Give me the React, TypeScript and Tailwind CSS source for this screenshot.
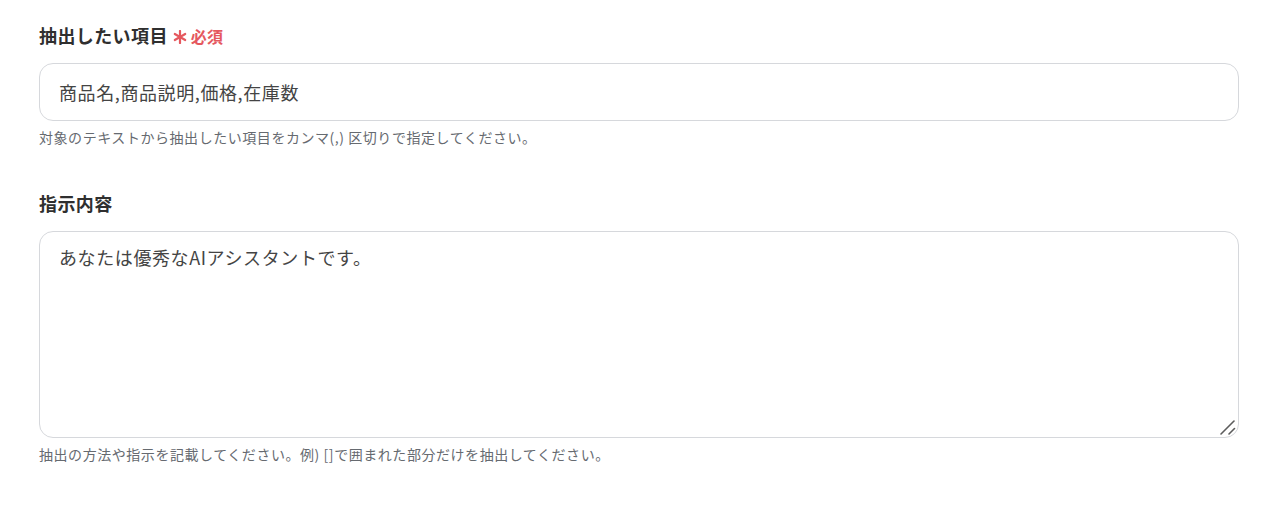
import React from "react";

const font = { fontFamily: '"Noto Sans CJK JP", "Noto Sans", sans-serif' };

const FieldLabel: React.FC<{ text: string; required?: boolean }> = ({ text, required }) => (
  <div className="flex items-center h-[27px]">
    <span className="text-[18px] font-bold text-[#2f2f2f] leading-[27px] tracking-[0.4px]">{text}</span>
    {required && (
      <span className="ml-[5px] flex items-center text-[#e5585e] text-[16px] font-semibold tracking-[0.3px]">
        <svg width="14" height="14" viewBox="0 0 14 14" className="mr-[4px] mt-[3px]">
          <g stroke="#e5585e" strokeWidth="2.2" strokeLinecap="round">
            <line x1="7" y1="1" x2="7" y2="13" />
            <line x1="1.8" y1="4" x2="12.2" y2="10" />
            <line x1="1.8" y1="10" x2="12.2" y2="4" />
          </g>
        </svg>
        必須
      </span>
    )}
  </div>
);

export default function App() {
  return (
    <div className="bg-white min-h-[512px] pt-[22px] pl-[39px] pr-[29px]" style={font}>
      <section>
        <FieldLabel text="抽出したい項目" required />
        <input
          readOnly
          defaultValue="商品名,商品説明,価格,在庫数"
          className="mt-[14px] block w-full h-[58px] rounded-[14px] border border-[#d6d8dc] pl-[19px] pr-5 text-[18px] tracking-[0.6px] text-[#444444] outline-none"
          style={font}
        />
        <p className="mt-1.5 text-[14px] leading-5 tracking-[0.55px] text-[#666a70]">
          対象のテキストから抽出したい項目をカンマ(,) 区切りで指定してください。
        </p>
      </section>

      <section className="mt-[43px]">
        <FieldLabel text="指示内容" />
        <div className="relative mt-[14px]">
          <textarea
            readOnly
            defaultValue="あなたは優秀なAIアシスタントです。"
            className="block w-full h-[207px] rounded-[14px] border border-[#d6d8dc] pl-[19px] pr-5 py-3 text-[18px] leading-[27px] tracking-[0.6px] text-[#444444] outline-none resize-none"
            style={font}
          />
          <svg width="18" height="18" viewBox="0 0 18 18" className="absolute right-[2px] bottom-[2px] pointer-events-none">
            <g stroke="#5c5c5c" strokeWidth="1.6" strokeLinecap="round">
              <line x1="2" y1="16" x2="15" y2="3" />
              <line x1="10" y1="16" x2="15.5" y2="10.5" />
            </g>
          </svg>
        </div>
        <p className="mt-1.5 text-[14px] leading-5 tracking-[0.55px] text-[#666a70]">
          抽出の方法や指示を記載してください。例) []で囲まれた部分だけを抽出してください。
        </p>
      </section>
    </div>
  );
}
